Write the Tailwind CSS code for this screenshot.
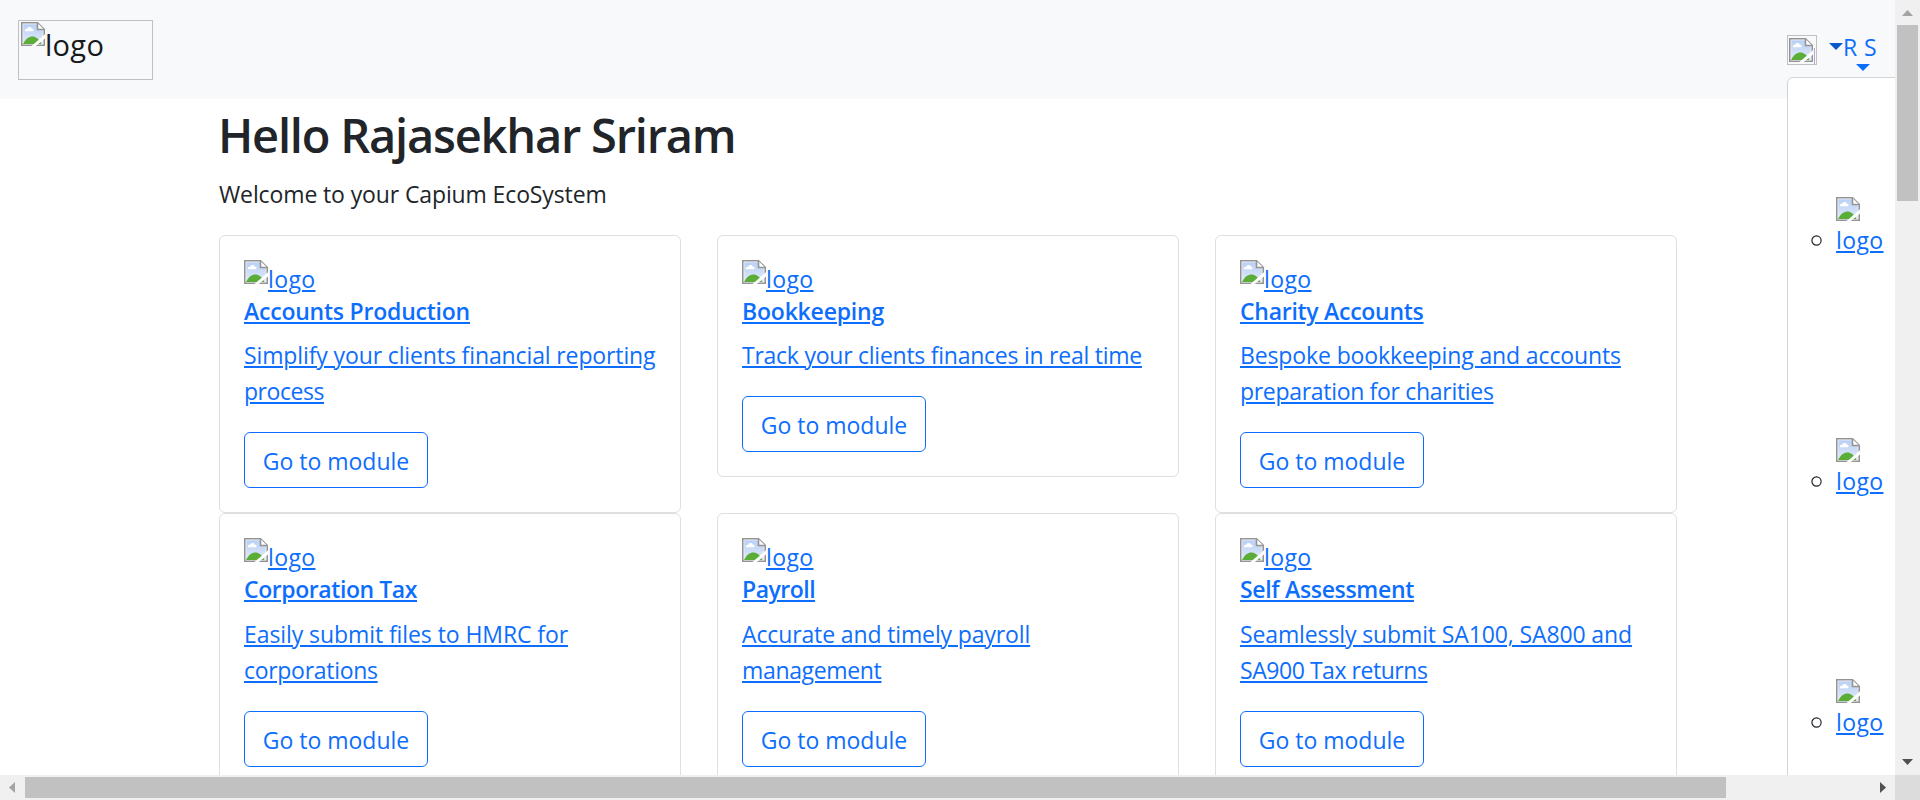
<!DOCTYPE html>
<html lang="en">
<head>
<meta charset="utf-8">
<title>Capium</title>
<script src="https://cdn.jsdelivr.net/npm/@tailwindcss/browser@4"></script>
</head>
<body class="h-[800px] w-[1920px] overflow-hidden bg-white font-['Open_Sans','Noto_Sans',sans-serif] text-[23px] leading-9 text-[#212529]">
<svg class="absolute size-0">
  <defs>
    <linearGradient id="sky" x1="0" y1="0" x2="0" y2="1"><stop offset="0" stop-color="#b9d0f5"/><stop offset="1" stop-color="#e0e9fa"/></linearGradient>
    <symbol id="broken" viewBox="0 0 24 24">
      <path d="M0 0H17L24 7V24H0Z" fill="#fff"/>
      <path d="M2.2 2.2H16V8H21.8V21.8H2.2Z" fill="url(#sky)"/>
      <path d="M4 9.300C3.300 7.300 5 6.300 6.300 6.800 7 4.300 10.300 4.300 10.800 6.800 12.800 6.600 13.200 9.300 11.500 9.300Z" fill="#fff"/>
      <path d="M2 22C4.500 17 8 14.600 11.500 14.600 14.500 14.600 18 16.500 20.500 22Z" fill="#5aae38"/>
      <path d="M.75 .75H16.500L23.250 7.500V23.250H.75Z" fill="none" stroke="#949494" stroke-width="1.600"/>
      <path d="M16.500 1V7.500H23" fill="#fff" stroke="#949494" stroke-width="1.600"/>
      <path d="M10.500 24H14.800L24 16.500V12.200Z" fill="#fff"/>
    </symbol>
  </defs>
</svg>
<div class="grid h-full grid-cols-[1895px_25px] grid-rows-[775px_25px]">
  <div class="relative overflow-hidden">
    <nav class="flex h-[99px] items-start justify-between bg-[#f8f9fb] pl-[18px]">
      <a class="mt-5 flex h-[60px] w-[135px] items-start border border-[#c0c0c0] pt-px pl-0.5 text-[29px] leading-[46px] text-[#17191c]">
        <svg class="size-6 shrink-0"><use href="#broken"/></svg><span class="tracking-[0.3px]">logo</span>
      </a>
      <div class="mt-[35px] flex items-start text-[#0d6efd]">
        <span class="flex size-[30px] items-start border border-[#c0c0c0] pt-0.5 pl-px"><svg class="size-6 shrink-0"><use href="#broken"/></svg><span class="mt-2.5 ml-px h-4 w-px bg-[#b9a3cf]"></span></span>
        <svg class="mt-2 ml-3 h-[7px] w-[14px]" viewBox="0 0 14 7"><path d="M0 0H14L7 7Z" fill="#0a58ca"/></svg>
        <span class="flex w-[52px] flex-col">
          <span class="-mt-1.5 h-[35px] leading-9 tracking-[0.4px]">R S</span>
          <svg class="ml-[13px] h-[7px] w-[14px]" viewBox="0 0 14 7"><path d="M0 0H14L7 7Z" fill="#0d6efd"/></svg>
        </span>
      </div>
    </nav>
    <main class="pl-[219px]">
      <h1 class="-ml-px pt-[7px] text-[47px] leading-[58px] font-semibold tracking-[-1.21px]">Hello Rajasekhar Sriram</h1>
      <p class="mt-3 tracking-[-0.12px]">Welcome to your Capium EcoSystem</p>
      <div class="mt-[23px] grid grid-cols-[462px_462px_462px] items-start gap-x-9 text-[#0d6efd]">
        <section class="h-[278px] rounded-md border border-[#dfdfdf] p-6">
          <a class="flex h-[37px] items-start leading-[38px]"><svg class="size-6 shrink-0"><use href="#broken"/></svg><span class="tracking-[0.38px] underline decoration-2 underline-offset-2">logo</span></a>
          <h5 class="mb-3 h-7 leading-7 font-semibold tracking-[-0.22px] underline decoration-2 underline-offset-2">Accounts Production</h5>
          <p class="mb-[23px] whitespace-nowrap underline decoration-2 underline-offset-2"><span class="tracking-[-0.12px]">Simplify your clients financial reporting</span><br><span class="tracking-[-0.45px]">process</span></p>
          <a class="flex h-14 w-[184px] items-center justify-center rounded-md border border-[#0d6efd] pt-0.5 whitespace-nowrap">Go to module</a>
        </section>
        <section class="h-[242px] rounded-md border border-[#dfdfdf] p-6">
          <a class="flex h-[37px] items-start leading-[38px]"><svg class="size-6 shrink-0"><use href="#broken"/></svg><span class="tracking-[0.38px] underline decoration-2 underline-offset-2">logo</span></a>
          <h5 class="mb-3 h-7 leading-7 font-semibold tracking-[-0.2px] underline decoration-2 underline-offset-2">Bookkeeping</h5>
          <p class="mb-[23px] whitespace-nowrap underline decoration-2 underline-offset-2"><span class="tracking-[-0.25px]">Track your clients finances in real time</span></p>
          <a class="flex h-14 w-[184px] items-center justify-center rounded-md border border-[#0d6efd] pt-0.5 whitespace-nowrap">Go to module</a>
        </section>
        <section class="h-[278px] rounded-md border border-[#dfdfdf] p-6">
          <a class="flex h-[37px] items-start leading-[38px]"><svg class="size-6 shrink-0"><use href="#broken"/></svg><span class="tracking-[0.38px] underline decoration-2 underline-offset-2">logo</span></a>
          <h5 class="mb-3 h-7 leading-7 font-semibold tracking-[-0.27px] underline decoration-2 underline-offset-2">Charity Accounts</h5>
          <p class="mb-[23px] whitespace-nowrap underline decoration-2 underline-offset-2"><span class="tracking-[-0.12px]">Bespoke bookkeeping and accounts</span><br><span class="tracking-[-0.31px]">preparation for charities</span></p>
          <a class="flex h-14 w-[184px] items-center justify-center rounded-md border border-[#0d6efd] pt-0.5 whitespace-nowrap">Go to module</a>
        </section>
        <section class="h-[279px] rounded-md border border-[#dfdfdf] p-6">
          <a class="flex h-[37px] items-start leading-[38px]"><svg class="size-6 shrink-0"><use href="#broken"/></svg><span class="tracking-[0.38px] underline decoration-2 underline-offset-2">logo</span></a>
          <h5 class="mb-[13px] h-7 leading-7 font-semibold tracking-[-0.42px] underline decoration-2 underline-offset-2">Corporation Tax</h5>
          <p class="mb-[23px] whitespace-nowrap underline decoration-2 underline-offset-2"><span class="tracking-[-0.08px]">Easily submit files to HMRC for</span><br><span class="tracking-[-0.3px]">corporations</span></p>
          <a class="flex h-14 w-[184px] items-center justify-center rounded-md border border-[#0d6efd] pt-0.5 whitespace-nowrap">Go to module</a>
        </section>
        <section class="h-[279px] rounded-md border border-[#dfdfdf] p-6">
          <a class="flex h-[37px] items-start leading-[38px]"><svg class="size-6 shrink-0"><use href="#broken"/></svg><span class="tracking-[0.38px] underline decoration-2 underline-offset-2">logo</span></a>
          <h5 class="mb-[13px] h-7 leading-7 font-semibold tracking-[-0.5px] underline decoration-2 underline-offset-2">Payroll</h5>
          <p class="mb-[23px] whitespace-nowrap underline decoration-2 underline-offset-2"><span class="tracking-[-0.13px]">Accurate and timely payroll</span><br><span class="tracking-[-0.34px]">management</span></p>
          <a class="flex h-14 w-[184px] items-center justify-center rounded-md border border-[#0d6efd] pt-0.5 whitespace-nowrap">Go to module</a>
        </section>
        <section class="h-[279px] rounded-md border border-[#dfdfdf] p-6">
          <a class="flex h-[37px] items-start leading-[38px]"><svg class="size-6 shrink-0"><use href="#broken"/></svg><span class="tracking-[0.38px] underline decoration-2 underline-offset-2">logo</span></a>
          <h5 class="mb-[13px] h-7 leading-7 font-semibold tracking-[-0.32px] underline decoration-2 underline-offset-2">Self Assessment</h5>
          <p class="mb-[23px] whitespace-nowrap underline decoration-2 underline-offset-2"><span class="tracking-[-0.12px]">Seamlessly submit SA100, SA800 and</span><br><span class="tracking-[-0.45px]">SA900 Tax returns</span></p>
          <a class="flex h-14 w-[184px] items-center justify-center rounded-md border border-[#0d6efd] pt-0.5 whitespace-nowrap">Go to module</a>
        </section>
      </div>
    </main>
    <!-- user menu, open and running past the right edge -->
    <ul class="absolute top-[77px] left-[1787px] flex h-[900px] w-[240px] flex-col gap-[181px] rounded-md border border-[#d3d4d5] bg-white pt-[119px] pl-[23px] text-[#0d6efd]">
      <li class="flex h-[60px] items-start"><svg class="mt-[38px] mr-3.5 size-[11px]" viewBox="0 0 11 11"><circle cx="5.500" cy="5.500" r="4.600" fill="none" stroke="#212529" stroke-width="1.200"/></svg><a class="flex flex-col"><svg class="size-6"><use href="#broken"/></svg><span class="leading-[38px] tracking-[0.38px] underline decoration-2 underline-offset-2">logo</span></a></li>
      <li class="flex h-[60px] items-start"><svg class="mt-[38px] mr-3.5 size-[11px]" viewBox="0 0 11 11"><circle cx="5.500" cy="5.500" r="4.600" fill="none" stroke="#212529" stroke-width="1.200"/></svg><a class="flex flex-col"><svg class="size-6"><use href="#broken"/></svg><span class="leading-[38px] tracking-[0.38px] underline decoration-2 underline-offset-2">logo</span></a></li>
      <li class="flex h-[60px] items-start"><svg class="mt-[38px] mr-3.5 size-[11px]" viewBox="0 0 11 11"><circle cx="5.500" cy="5.500" r="4.600" fill="none" stroke="#212529" stroke-width="1.200"/></svg><a class="flex flex-col"><svg class="size-6"><use href="#broken"/></svg><span class="leading-[38px] tracking-[0.38px] underline decoration-2 underline-offset-2">logo</span></a></li>
    </ul>
  </div>
  <!-- vertical scrollbar -->
  <div class="flex flex-col items-center bg-[#f0f0f0]">
    <svg class="mt-2.5 h-1.5 w-[11px]" viewBox="0 0 11 6"><path d="M0 6L5.500 0L11 6Z" fill="#a3a3a3"/></svg>
    <div class="mt-[9px] h-44 w-[21px] bg-[#c1c1c1]"></div>
    <svg class="mt-auto mb-[10px] h-1.5 w-[11px]" viewBox="0 0 11 6"><path d="M0 0H11L5.500 6Z" fill="#505050"/></svg>
  </div>
  <!-- horizontal scrollbar -->
  <div class="flex items-center bg-[#f0f0f0]">
    <svg class="ml-[9px] h-[11px] w-1.5" viewBox="0 0 6 11"><path d="M6 0V11L0 5.500Z" fill="#a3a3a3"/></svg>
    <div class="ml-2.5 h-[21px] w-[1701px] bg-[#c1c1c1]"></div>
    <svg class="mr-[9px] ml-auto h-[11px] w-1.5" viewBox="0 0 6 11"><path d="M0 0V11L6 5.500Z" fill="#505050"/></svg>
  </div>
  <div class="bg-[#dcdcdc]"></div>
</div>
</body>
</html>
